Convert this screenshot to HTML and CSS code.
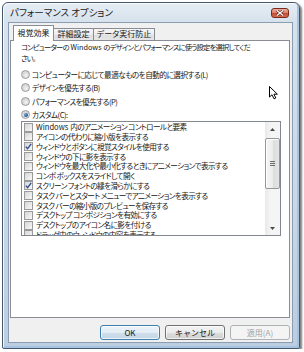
FILE: index.html
```html
<!DOCTYPE html>
<html lang="ja">
<head>
    <meta charset="UTF-8">
    <meta name="viewport" content="width=device-width, initial-scale=1.0">
    <title>パフォーマンス オプション</title>
    <link rel="stylesheet" href="styles.css">
</head>
<body>
    <div class="window">
        <div class="titlebar">
            <span class="title">パフォーマンス オプション</span>
            <button class="close-btn">
                <svg width="8" height="6" viewBox="0 0 8 6"><path d="M1 0.5 L7 5.5 M7 0.5 L1 5.5" stroke="#5a1a10" stroke-width="2.6"/><path d="M1 0.5 L7 5.5 M7 0.5 L1 5.5" stroke="#fff" stroke-width="1.4"/></svg>
            </button>
        </div>

        <div class="client">
            <div class="tabs">
                <div class="tab active tab-visual">視覚効果</div>
                <div class="tab tab-advanced">詳細設定</div>
                <div class="tab tab-dep">データ実行防止</div>
            </div>

            <div class="panel">
                <p class="desc">コンピューターの <span class="en">Windows</span> のデザインとパフォーマンスに使う設定を選択してくだ<br>さい。</p>

                <div class="radios">
                    <div class="radio-row"><span class="radio"></span>コンピューターに応じて最適なものを自動的に選択する(L)</div>
                    <div class="radio-row"><span class="radio"></span>デザインを優先する(B)</div>
                    <div class="radio-row"><span class="radio"></span>パフォーマンスを優先する(P)</div>
                    <div class="radio-row"><span class="radio on"></span>カスタム(C):</div>
                </div>

                <div class="listbox">
                    <ul class="items">
                        <li><span class="check"></span><span class="en">Windows</span> 内のアニメーション コントロールと要素</li>
                        <li><span class="check"></span>アイコンの代わりに縮小版を表示する</li>
                        <li><span class="check on"><svg width="7" height="7" viewBox="0 0 7 7"><path d="M0.8 3.6 L2.6 5.6 L6.2 0.9" fill="none" stroke="#2f4f8f" stroke-width="1.4"/></svg></span>ウィンドウとボタンに視覚スタイルを使用する</li>
                        <li><span class="check"></span>ウィンドウの下に影を表示する</li>
                        <li><span class="check"></span>ウィンドウを最大化や最小化するときにアニメーションで表示する</li>
                        <li><span class="check"></span>コンボ ボックスをスライドして開く</li>
                        <li><span class="check on"><svg width="7" height="7" viewBox="0 0 7 7"><path d="M0.8 3.6 L2.6 5.6 L6.2 0.9" fill="none" stroke="#2f4f8f" stroke-width="1.4"/></svg></span>スクリーン フォントの縁を滑らかにする</li>
                        <li><span class="check"></span>タスク バーとスタート メニューでアニメーションを表示する</li>
                        <li><span class="check"></span>タスク バーの縮小版のプレビューを保存する</li>
                        <li><span class="check"></span>デスクトップ コンポジションを有効にする</li>
                        <li><span class="check"></span>デスクトップのアイコン名に影を付ける</li>
                        <li><span class="check"></span>ドラッグ中のウィンドウの内容を表示する</li>
                    </ul>
                    <div class="scrollbar">
                        <div class="sb-btn"><svg width="5" height="3" viewBox="0 0 5 3"><path d="M0 3 L2.5 0 L5 3 Z" fill="#4a4a4a"/></svg></div>
                        <div class="sb-track">
                            <div class="sb-thumb"><span class="grip"></span></div>
                        </div>
                        <div class="sb-btn"><svg width="5" height="3" viewBox="0 0 5 3"><path d="M0 0 L2.5 3 L5 0 Z" fill="#4a4a4a"/></svg></div>
                    </div>
                </div>
            </div>

            <div class="buttons">
                <button class="btn default">OK</button>
                <button class="btn">キャンセル</button>
                <button class="btn disabled">適用(A)</button>
            </div>
        </div>
    </div>

    <!-- mouse pointer over the dialog -->
    <svg class="cursor" width="11" height="14" viewBox="0 0 11 14">
        <path d="M0.5 0.5 V11 L3 8.8 L5 12.8 L6.8 12 L4.9 8.2 H8.4 Z" fill="#fff" stroke="#000" stroke-width="1" stroke-linejoin="round"/>
    </svg>
</body>
</html>
```

FILE: styles.css
```css
* {
    box-sizing: border-box;
}

body {
    margin: 0;
    background: #fff;
    font-family: "Noto Sans CJK JP", "Noto Sans", sans-serif;
    font-feature-settings: "palt" 1;
    font-size: 7.6px;
    letter-spacing: -0.5px;
    color: #151515;
}

.en {
    letter-spacing: 0;
}

.window {
    margin: 2px 0 0 2px;
    width: 298px;
    height: 347px;
    padding: 0 6px 5px 5px;
    border: 1px solid #46566b;
    border-radius: 6px 6px 2px 2px;
    background: linear-gradient(180deg, #e6edf4 0, #d7e2ed 18px, #c9d7e6 60%, #bccde0 100%);
    box-shadow: 2px 2px 2px rgba(0, 0, 0, 0.5), inset 1px 1px 0 rgba(255, 255, 255, 0.8), inset -2px -2px 0 #a6c4e2;
}

.titlebar {
    display: flex;
    height: 19px;
}

.title {
    padding-left: 2px;
    font-size: 9.5px;
    letter-spacing: 0;
    line-height: 19px;
    color: #1a1a1a;
}

.close-btn {
    margin: 5px 4px 0 auto;
    width: 18px;
    height: 10px;
    padding: 0;
    display: flex;
    align-items: center;
    justify-content: center;
    border: 1px solid #7a2a1c;
    border-radius: 3px;
    background: linear-gradient(180deg, #eab0a2 0%, #d97a63 50%, #c24d33 51%, #d26b4e 100%);
}

.client {
    display: flex;
    flex-direction: column;
    height: 321px;
    border: 1px solid #8a9db3;
    background: #f0f0f0;
}

.tabs {
    display: flex;
    align-items: flex-end;
    height: 15px;
    margin-top: 2px;
    padding-left: 4px;
}

.tab {
    height: 12px;
    padding: 0;
    font-size: 8px;
    letter-spacing: 0;
    line-height: 10px;
    text-align: center;
    border-top: 1px solid #898c95;
    border-right: 1px solid #898c95;
    background: linear-gradient(180deg, #f6f6f6 0%, #ececec 50%, #dedede 51%, #e6e6e6 100%);
    white-space: nowrap;
}

.tab.active {
    position: relative;
    z-index: 1;
    height: 16px;
    margin-bottom: -1px;
    padding-top: 2px;
    border-left: 1px solid #898c95;
    background: #fff;
}

.tab-visual {
    width: 41px;
}

.tab-advanced {
    width: 40px;
}

.tab-dep {
    width: 61px;
}

.panel {
    height: 278px;
    margin: 0 2px 0 1px;
    padding: 1px 0 0 10px;
    border: 1px solid #898c95;
    background: #fff;
}

.desc {
    margin: 0;
    font-size: 7.3px;
    line-height: 11px;
    letter-spacing: -0.8px;
    white-space: nowrap;
}

.desc .en {
    margin: 0 1px;
}

.radios {
    margin-top: 4px;
}

.radio-row {
    display: flex;
    align-items: center;
    height: 13.3px;
    white-space: nowrap;
}

.radio {
    position: relative;
    flex: none;
    width: 9px;
    height: 9px;
    margin-right: 2px;
    border: 1px solid #9a9a9a;
    border-radius: 50%;
    background: radial-gradient(circle at 60% 65%, #f4f4f4 0, #dcdcdc 45%, #cfcfcf 100%);
}

.radio.on::after {
    content: "";
    position: absolute;
    left: 1.5px;
    top: 1.5px;
    width: 4px;
    height: 4px;
    border-radius: 50%;
    background: radial-gradient(circle at 35% 35%, #6fa6d8 0, #1f4f8c 70%);
}

.listbox {
    display: flex;
    width: 260px;
    height: 115px;
    border: 1px solid #828790;
    background: #fff;
    overflow: hidden;
}

.items {
    flex: 1;
    margin: 0;
    padding: 0;
    list-style: none;
    overflow: hidden;
}

.items li {
    display: flex;
    align-items: center;
    height: 9.8px;
    padding-left: 2px;
    line-height: 9.8px;
    letter-spacing: -0.6px;
    white-space: nowrap;
}

.items li .en {
    margin-right: 2px;
}

.check {
    display: flex;
    align-items: center;
    justify-content: center;
    flex: none;
    width: 9px;
    height: 9px;
    margin-right: 3px;
    border: 1px solid #9a9a9a;
    background: linear-gradient(135deg, #d6d6d6 0%, #e9e9e9 55%, #f8f8f8 100%);
}

.scrollbar {
    display: flex;
    flex-direction: column;
    width: 15px;
    background: linear-gradient(90deg, #e9e9e9 0%, #f5f5f5 40%, #f5f5f5 100%);
}

.sb-btn {
    display: flex;
    align-items: center;
    justify-content: center;
    height: 14px;
}

.sb-track {
    flex: 1;
    padding-top: 2px;
}

.sb-thumb {
    display: flex;
    align-items: center;
    justify-content: center;
    height: 51px;
    border: 1px solid #979797;
    border-radius: 2px;
    background: linear-gradient(90deg, #f7f7f7 0%, #ececec 50%, #dcdcdc 51%, #e4e4e4 100%);
    box-shadow: inset 1px 1px 0 #fff;
}

.grip {
    width: 5px;
    height: 5px;
    background: repeating-linear-gradient(180deg, #6b6b6b 0, #6b6b6b 1px, transparent 1px, transparent 2px);
}

.buttons {
    display: flex;
    justify-content: flex-end;
    gap: 5px;
    margin: 7px 2px 0 0;
}

.btn {
    width: 60px;
    height: 15px;
    padding: 0;
    border: 1px solid #707070;
    border-radius: 3px;
    font-family: inherit;
    font-size: 8px;
    line-height: 13px;
    color: #151515;
    background: linear-gradient(180deg, #f3f3f3 0%, #ebebeb 50%, #dddddd 51%, #cfcfcf 100%);
    box-shadow: inset 0 0 0 1px rgba(255, 255, 255, 0.7);
}

.btn.default {
    border-color: #3c7fb1;
    background: linear-gradient(180deg, #eef5fb 0%, #e1ecf5 50%, #cfdeeb 51%, #c3d6e6 100%);
}

.btn.disabled {
    border-color: #adb2b5;
    background: #f4f4f4;
    color: #a3a3a3;
    box-shadow: none;
}

.cursor {
    position: absolute;
    left: 269px;
    top: 86px;
}
```
